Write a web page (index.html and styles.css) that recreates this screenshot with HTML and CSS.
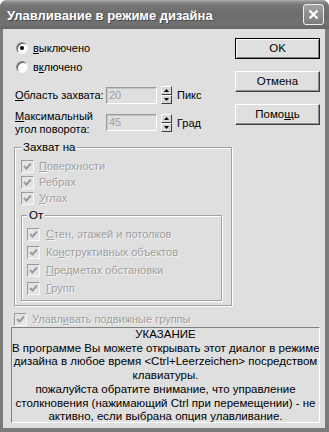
FILE: index.html
```html
<!DOCTYPE html>
<html lang="ru">
<head>
    <meta charset="UTF-8">
    <meta name="viewport" content="width=device-width, initial-scale=1.0">
    <title>Улавливание в режиме дизайна</title>
    <link rel="stylesheet" href="styles.css">
</head>
<body>
    <div class="window">
        <div class="titlebar">
            <span class="title">Улавливание в режиме дизайна</span>
            <span class="close-btn">
                <svg width="11" height="11" viewBox="0 0 11 11"><path d="M1.5 1.5L9.5 9.5M9.5 1.5L1.5 9.5" stroke="#fff" stroke-width="2.2"/></svg>
            </span>
        </div>
        <div class="client">
            <div class="top">
                <div class="settings">
                    <div class="radio-row"><span class="radio checked"></span><span><u>в</u>ыключено</span></div>
                    <div class="radio-row"><span class="radio"></span><span>в<u>к</u>лючено</span></div>
                    <div class="field-row first">
                        <span class="field-label"><u>О</u>бласть захвата:</span>
                        <span class="input">20</span>
                        <span class="spin">
                            <span class="spin-btn"><svg width="5" height="3" viewBox="0 0 5 3"><path d="M2.5 0L5 3H0Z"/></svg></span>
                            <span class="spin-btn"><svg width="5" height="3" viewBox="0 0 5 3"><path d="M0 0H5L2.5 3Z"/></svg></span>
                        </span>
                        <span class="unit">Пикс</span>
                    </div>
                    <div class="field-row second">
                        <span class="field-label"><u>М</u>аксимальный<br>угол поворота:</span>
                        <span class="input">45</span>
                        <span class="spin">
                            <span class="spin-btn"><svg width="5" height="3" viewBox="0 0 5 3"><path d="M2.5 0L5 3H0Z"/></svg></span>
                            <span class="spin-btn"><svg width="5" height="3" viewBox="0 0 5 3"><path d="M0 0H5L2.5 3Z"/></svg></span>
                        </span>
                        <span class="unit">Град</span>
                    </div>
                </div>
                <div class="buttons">
                    <button class="btn default">OK</button>
                    <button class="btn">Отмена</button>
                    <button class="btn">Помо<u>щ</u>ь</button>
                </div>
            </div>

            <fieldset class="group outer">
                <legend>Захват на</legend>
                <div class="check-row first"><span class="check"><svg width="11" height="11" viewBox="0 0 11 11"><path d="M2 5L4.5 7.5L9 2.5" fill="none" stroke="#9c9c9c" stroke-width="2"/></svg></span><span class="off"><u>П</u>оверхности</span></div>
                <div class="check-row"><span class="check"><svg width="11" height="11" viewBox="0 0 11 11"><path d="M2 5L4.5 7.5L9 2.5" fill="none" stroke="#9c9c9c" stroke-width="2"/></svg></span><span class="off">Ребрах</span></div>
                <div class="check-row"><span class="check"><svg width="11" height="11" viewBox="0 0 11 11"><path d="M2 5L4.5 7.5L9 2.5" fill="none" stroke="#9c9c9c" stroke-width="2"/></svg></span><span class="off"><u>У</u>глах</span></div>

                <fieldset class="group inner">
                    <legend>От</legend>
                    <div class="check-row first"><span class="check"><svg width="11" height="11" viewBox="0 0 11 11"><path d="M2 5L4.5 7.5L9 2.5" fill="none" stroke="#9c9c9c" stroke-width="2"/></svg></span><span class="off"><u>С</u>тен, этажей и потолков</span></div>
                    <div class="check-row"><span class="check"><svg width="11" height="11" viewBox="0 0 11 11"><path d="M2 5L4.5 7.5L9 2.5" fill="none" stroke="#9c9c9c" stroke-width="2"/></svg></span><span class="off">Ко<u>н</u>структивных объектов</span></div>
                    <div class="check-row"><span class="check"><svg width="11" height="11" viewBox="0 0 11 11"><path d="M2 5L4.5 7.5L9 2.5" fill="none" stroke="#9c9c9c" stroke-width="2"/></svg></span><span class="off"><u>П</u>редметах обстановки</span></div>
                    <div class="check-row"><span class="check"><svg width="11" height="11" viewBox="0 0 11 11"><path d="M2 5L4.5 7.5L9 2.5" fill="none" stroke="#9c9c9c" stroke-width="2"/></svg></span><span class="off"><u>Г</u>рупп</span></div>
                </fieldset>
            </fieldset>

            <div class="check-row lone"><span class="check"><svg width="11" height="11" viewBox="0 0 11 11"><path d="M2 5L4.5 7.5L9 2.5" fill="none" stroke="#9c9c9c" stroke-width="2"/></svg></span><span class="off">Улавл<u>и</u>вать подвижные группы</span></div>

            <div class="hint">
                УКАЗАНИЕ<br>
                В программе Вы можете открывать этот диалог в режиме<br>
                дизайна в любое время &lt;Ctrl+Leerzeichen&gt; посредством<br>
                клавиатуры.<br>
                пожалуйста обратите внимание, что управление<br>
                столкновения (нажимающий Ctrl при перемещении) - не<br>
                активно, если выбрана опция улавливание.
            </div>
        </div>
    </div>
</body>
</html>
```

FILE: styles.css
```css
* {
    box-sizing: border-box;
}
body {
    margin: 0;
    background: #fff;
    font-family: "Liberation Sans", Arial, sans-serif;
    font-size: 11px;
    color: #000;
}
.window {
    width: 329px;
    height: 432px;
    display: flex;
    flex-direction: column;
    background: #7b7b7b;
    border-radius: 7px 7px 0 0;
    overflow: hidden;
}
.titlebar {
    height: 29px;
    flex: none;
    display: flex;
    align-items: center;
    justify-content: space-between;
    padding: 0 5px 0 7px;
    background: linear-gradient(#b0b0b0 0, #8c8c8c 2px, #767676 5px, #6c6c6c 14px, #717171 24px, #676767 29px);
}
.title {
    color: #fff;
    font-weight: bold;
    font-size: 13px;
    padding-top: 2px;
    text-shadow: 1px 1px #4a4a4a;
}
.close-btn {
    width: 21px;
    height: 21px;
    border: 1px solid #eee;
    border-radius: 3px;
    background: linear-gradient(#a2a2a2, #7c7c7c);
    display: flex;
    align-items: center;
    justify-content: center;
}
.client {
    flex: 1;
    margin: 0 4px 4px 3px;
    background: #dfdfdf;
    padding: 9px 5px 0 8px;
}

/* upper part: options + buttons */
.top {
    display: flex;
    height: 102px;
}
.settings {
    padding-left: 4px;
}
.radio-row {
    display: flex;
    align-items: center;
    gap: 5px;
    height: 19px;
}
.radio {
    position: relative;
    width: 12px;
    height: 12px;
    margin-left: 1px;
    border-radius: 50%;
    background: #fff;
    border: 1px solid;
    border-color: #8a8a8a #f4f4f4 #f4f4f4 #8a8a8a;
    box-shadow: inset 1px 1px #5c5c5c;
}
.radio.checked::after {
    content: "";
    position: absolute;
    left: 3px;
    top: 3px;
    width: 4px;
    height: 4px;
    border-radius: 50%;
    background: #000;
}
.field-row {
    display: flex;
}
.field-row.first {
    margin-top: 10px;
    height: 18px;
    align-items: center;
}
.field-row.second {
    margin-top: 6px;
    height: 26px;
    align-items: flex-start;
}
.field-label {
    width: 91px;
    line-height: 13px;
    white-space: nowrap;
}
.input {
    width: 51px;
    height: 17px;
    padding-left: 2px;
    line-height: 15px;
    color: #a0a0a0;
    border: 1px solid;
    border-color: #9a9a9a #fff #fff #9a9a9a;
    box-shadow: inset 1px 1px #c4c4c4;
}
.spin {
    display: flex;
    flex-direction: column;
    width: 11px;
    height: 18px;
    margin-left: 4px;
}
.field-row.second .input,
.field-row.second .spin {
    margin-top: 4px;
}
.spin-btn {
    flex: 1;
    display: flex;
    align-items: center;
    justify-content: center;
    background: #d8d8d8;
    border: 1px solid;
    border-color: #fff #3c3c3c #3c3c3c #fff;
}
.unit {
    margin-left: 5px;
}
.field-row.second .unit {
    align-self: center;
}
.buttons {
    margin-left: auto;
    width: 85px;
    display: flex;
    flex-direction: column;
    gap: 12px;
}
.btn {
    height: 21px;
    padding: 0;
    font: inherit;
    font-size: 11.5px;
    line-height: 17px;
    color: #000;
    background: #dfdfdf;
    border: 1px solid;
    border-color: #fff #404040 #404040 #fff;
    box-shadow: inset -1px -1px #8c8c8c;
}
.btn.default {
    border-color: #000;
    box-shadow: inset 1px 1px #fff, inset -1px -1px #808080;
}

/* group boxes */
.group {
    margin: 0;
    min-width: 0;
    border: 1px solid #a0a0a0;
    box-shadow: 1px 1px #fff, inset 1px 1px #fff;
}
.group legend {
    padding: 0 2px;
    line-height: 14px;
    font-size: 11.5px;
    background: #dfdfdf;
}
.group.outer {
    margin-left: 3px;
    width: 218px;
    height: 166px;
    padding: 0 0 0 6px;
}
.group.inner {
    margin-top: 2px;
    width: 201px;
    height: 93px;
    padding: 0 0 0 5px;
}
.check-row {
    display: flex;
    align-items: center;
    gap: 5px;
    height: 16px;
}
.outer > .check-row.first {
    margin-top: 4px;
}
.inner .check-row {
    height: 18px;
    gap: 6px;
}
.inner .check-row.first {
    margin-top: 3px;
}
.check {
    width: 13px;
    height: 13px;
    flex: none;
    display: flex;
    align-items: center;
    justify-content: center;
    background: #e4e4e4;
    border: 1px solid;
    border-color: #9a9a9a #f8f8f8 #f8f8f8 #9a9a9a;
}
.off {
    color: #a0a0a0;
    text-shadow: 1px 1px #f4f4f4;
}
.check-row.lone {
    margin-top: 5px;
    padding-left: 3px;
}

/* hint text */
.hint {
    height: 96px;
    overflow: hidden;
    text-align: center;
    white-space: nowrap;
    font-size: 11.5px;
    line-height: 13.7px;
    border: 1px solid;
    border-color: #808080 #fff #fff #808080;
}
```
